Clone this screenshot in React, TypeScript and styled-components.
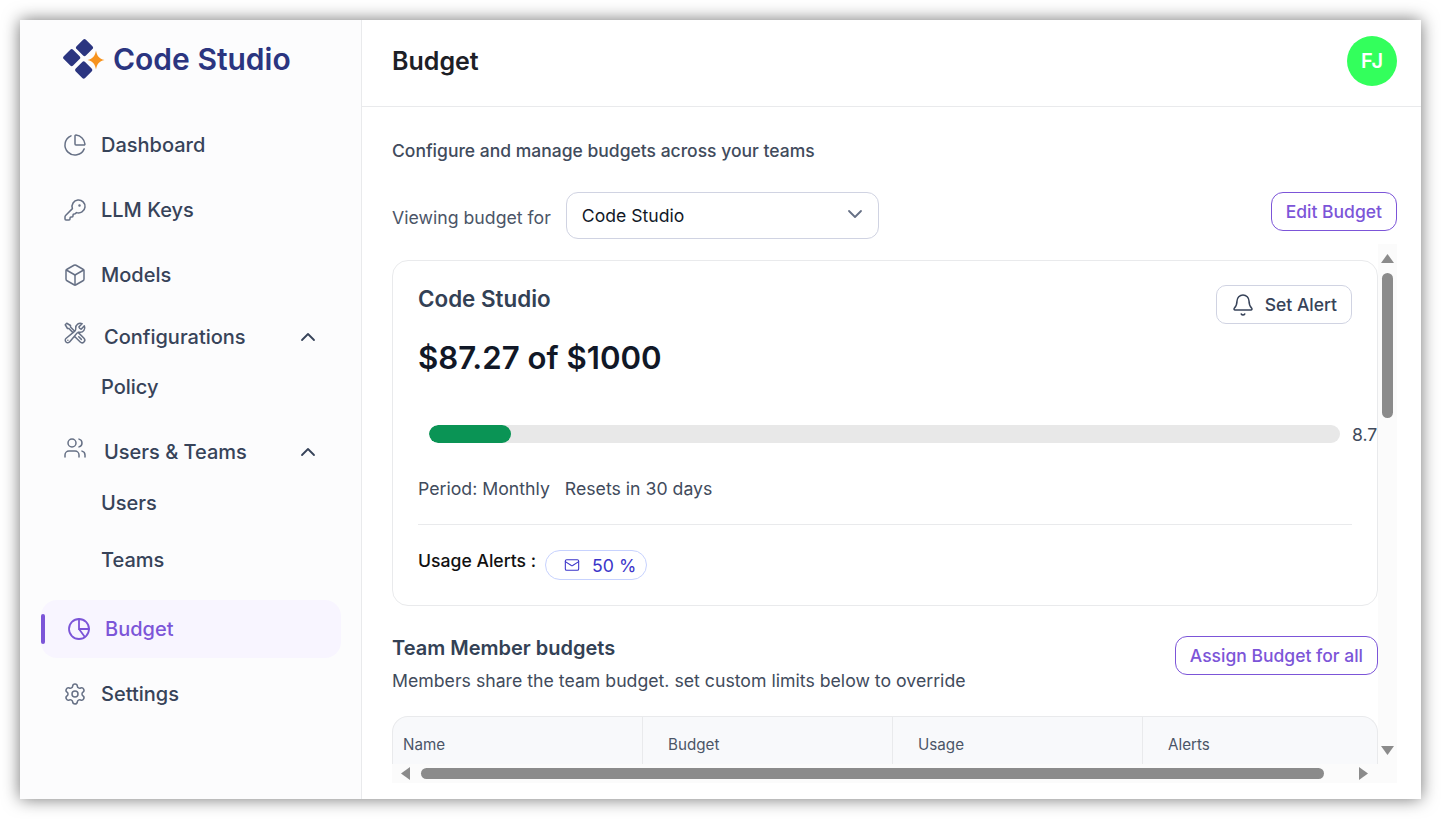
import React from 'react';
import styled, { createGlobalStyle } from 'styled-components';
import { Bell, Box, ChartPie, ChevronDown, ChevronUp, KeyRound, Mail, Settings, Users } from 'lucide-react';
import { HiOutlineWrenchScrewdriver } from 'react-icons/hi2';

const GlobalStyle = createGlobalStyle`
    html, body {
        margin: 0;
        padding: 0;
        background: #ffffff;
        font-family: 'Inter', 'Liberation Sans', sans-serif;
        overflow: hidden;
    }
    * {
        box-sizing: border-box;
    }
`;

const Frame = styled.div`
    display: flex;
    width: 1401px;
    height: 779px;
    margin: 20px;
    background: #ffffff;
    box-shadow: 0 0 16px rgba(0, 0, 0, 0.55);
    overflow: hidden;
`;

const Sidebar = styled.aside`
    display: flex;
    flex-direction: column;
    flex: 0 0 342px;
    padding: 0 20px 0 21px;
    background: #fcfcfd;
    border-right: 1px solid #e9eaec;
`;

const Brand = styled.div`
    display: flex;
    align-items: center;
    gap: 8px;
    height: 58px;
    margin: 10px 0 28px 22px;
`;

const BrandName = styled.div`
    font-size: 30px;
    font-weight: 600;
    color: #2b3580;
`;

const NavList = styled.nav`
    display: flex;
    flex-direction: column;
    gap: 7px;
`;

const NavItem = styled.div<{ $active?: boolean }>`
    position: relative;
    display: flex;
    align-items: center;
    gap: ${(props) => (props.$active ? '15px' : '14px')};
    height: 58px;
    margin-top: ${(props) => (props.$active ? '8px' : '0')};
    padding-left: ${(props) => (props.$active ? '27px' : '22px')};
    border-radius: 16px;
    font-size: 20px;
    font-weight: 500;
    color: ${(props) => (props.$active ? '#7c55d8' : '#374359')};
    background: ${(props) => (props.$active ? '#f8f5ff' : 'transparent')};

    svg {
        color: ${(props) => (props.$active ? '#7c55d8' : '#667085')};
        flex: none;
    }
`;

const ActiveMark = styled.span`
    position: absolute;
    left: 0;
    top: 14px;
    width: 4px;
    height: 30px;
    border-radius: 2px;
    background: #7c55d8;
`;

const NavGroup = styled.div<{ $first?: boolean }>`
    display: flex;
    flex-direction: column;
    margin-top: ${(props) => (props.$first ? '0' : '8px')};
`;

const GroupHead = styled.div`
    display: flex;
    align-items: center;
    gap: 17px;
    height: 52px;
    padding: 0 21px 0 22px;
    font-size: 20px;
    font-weight: 500;
    color: #374359;
`;

const GroupIcon = styled.span`
    display: flex;
    margin-bottom: 8px;
    color: #667085;
`;

const GroupLabel = styled.span`
    flex: 1;
`;

const SubList = styled.div`
    display: flex;
    flex-direction: column;
    gap: 7px;
`;

const SubItem = styled.div<{ $short?: boolean }>`
    display: flex;
    align-items: center;
    height: ${(props) => (props.$short ? '48px' : '50px')};
    padding-left: 60px;
    font-size: 20px;
    font-weight: 500;
    color: #374359;
`;

const Main = styled.main`
    display: flex;
    flex-direction: column;
    flex: 1;
    min-width: 0;
`;

const TopBar = styled.header`
    display: flex;
    align-items: center;
    justify-content: space-between;
    flex: 0 0 87px;
    padding: 0 24px 4px 30px;
    border-bottom: 1px solid #e9eaec;
`;

const PageTitle = styled.h1`
    margin: 0;
    font-size: 25px;
    font-weight: 600;
    color: #1d2026;
`;

const Avatar = styled.div`
    display: flex;
    align-items: center;
    justify-content: center;
    width: 50px;
    height: 50px;
    border-radius: 50%;
    background: #33ff5c;
    font-size: 20px;
    font-weight: 600;
    color: #ffffff;
`;

const Content = styled.div`
    display: flex;
    flex-direction: column;
    flex: 1;
    min-height: 0;
    padding: 34px 24px 16px 30px;
`;

const Intro = styled.p`
    margin: 0;
    font-size: 17.5px;
    line-height: 20px;
    font-weight: 500;
    color: #414b5c;
`;

const Toolbar = styled.div`
    display: flex;
    justify-content: space-between;
    align-items: flex-start;
    height: 52px;
    margin-top: 31px;
`;

const ViewingGroup = styled.div`
    display: flex;
    align-items: center;
    gap: 15px;
`;

const ViewingLabel = styled.span`
    font-size: 17.7px;
    color: #4b5567;
    margin-top: 3px;
`;

const SelectBox = styled.div`
    display: flex;
    align-items: center;
    justify-content: space-between;
    width: 313px;
    height: 47px;
    padding: 0 11px 0 15px;
    border: 1px solid #d0d3e2;
    border-radius: 12px;
    font-size: 17.6px;
    color: #111827;

    svg {
        color: #667085;
        margin-bottom: 3px;
    }
`;

const OutlineButton = styled.button`
    height: 39px;
    padding: 0 14px;
    background: #ffffff;
    border: 1px solid #7c55d8;
    border-radius: 12px;
    font-family: inherit;
    font-size: 17.5px;
    font-weight: 500;
    color: #7c55d8;
`;

const ScrollFrame = styled.div`
    display: grid;
    grid-template-columns: 986px 19px;
    grid-template-rows: 520px 19px;
`;

const Viewport = styled.div`
    overflow: hidden;
    padding-top: 16px;
`;

const Card = styled.section`
    height: 346px;
    padding: 24px 25px;
    border: 1px solid #e9eaec;
    border-radius: 16px;
    overflow: hidden;
`;

const CardHead = styled.div`
    display: flex;
    justify-content: space-between;
    align-items: flex-start;
`;

const CardTitle = styled.h2`
    margin: 0;
    font-size: 22.4px;
    line-height: 28px;
    font-weight: 600;
    color: #334155;
`;

const Amount = styled.div`
    margin-top: 25px;
    font-size: 31.2px;
    line-height: 40px;
    font-weight: 600;
    color: #111827;
`;

const AlertButton = styled.button`
    display: flex;
    align-items: center;
    gap: 10px;
    height: 39px;
    padding: 0 14px 0 14px;
    background: #ffffff;
    border: 1px solid #d0d3e2;
    border-radius: 10px;
    font-family: inherit;
    font-size: 17.5px;
    font-weight: 500;
    color: #374359;
`;

const ProgressRow = styled.div`
    display: flex;
    align-items: flex-start;
    gap: 12px;
    width: 1000px;
    margin: 47px 0 0 11px;
    white-space: nowrap;
`;

const ProgressTrack = styled.div`
    flex: 0 0 911px;
    height: 18px;
    border-radius: 9px;
    background: #e8e8e8;
    overflow: hidden;
`;

const ProgressFill = styled.div`
    height: 100%;
    border-radius: 9px;
    background: #0a9455;
`;

const ProgressValue = styled.span`
    font-size: 17.6px;
    line-height: 20px;
    color: #414b5c;
`;

const PeriodRow = styled.div`
    display: flex;
    gap: 15px;
    margin-top: 34px;
    font-size: 17.7px;
    line-height: 20px;
    color: #414b5c;
`;

const Divider = styled.hr`
    height: 1px;
    margin: 25px 0 0;
    border: 0;
    background: #e9eaec;
`;

const AlertsRow = styled.div`
    display: flex;
    align-items: flex-start;
    gap: 9px;
    margin-top: 25px;
`;

const AlertsLabel = styled.span`
    margin-top: 1px;
    font-size: 17.6px;
    line-height: 20px;
    font-weight: 500;
    color: #111111;
`;

const AlertPill = styled.div`
    display: flex;
    align-items: center;
    gap: 12px;
    height: 30px;
    padding: 0 10px 0 18px;
    border: 1px solid #c7d2fe;
    border-radius: 15px;
    font-size: 17.7px;
    font-weight: 400;
    color: #3b35c9;
`;

const TeamHead = styled.div`
    display: flex;
    justify-content: space-between;
    align-items: flex-start;
    margin-top: 30px;
`;

const TeamTitle = styled.h3`
    margin: 0;
    font-size: 20px;
    line-height: 24px;
    font-weight: 600;
    color: #334155;
`;

const TeamHint = styled.p`
    margin: 11px 0 0;
    font-size: 17.7px;
    line-height: 20px;
    color: #414b5c;
`;

const TableHead = styled.div`
    display: grid;
    grid-template-columns: 249px 250px 250px 1fr;
    height: 60px;
    margin-top: 25px;
    background: #f8f9fb;
    border: 1px solid #e9eaec;
    border-bottom: 0;
    border-radius: 16px 16px 0 0;
`;

const HeadCell = styled.div<{ $first?: boolean }>`
    padding: 18px 0 0 ${(props) => (props.$first ? '10px' : '25px')};
    border-left: ${(props) => (props.$first ? '0' : '1px solid #e9eaec')};
    font-size: 15.2px;
    line-height: 20px;
    font-weight: 400;
    color: #4b5567;
`;

const VerticalBar = styled.div`
    display: flex;
    flex-direction: column;
    align-items: center;
    padding-top: 10px;
    background: #fbfbfb;
`;

const VerticalThumb = styled.div`
    width: 11px;
    height: 145px;
    margin: 10px 0 328px;
    border-radius: 6px;
    background: #8b8b8b;
`;

const HorizontalBar = styled.div`
    display: flex;
    align-items: center;
    padding-left: 9px;
    background: #fbfbfb;
`;

const HorizontalThumb = styled.div`
    width: 903px;
    height: 11px;
    margin: 0 35px 0 11px;
    border-radius: 6px;
    background: #8b8b8b;
`;

const Corner = styled.div`
    background: #fbfbfb;
`;

const Arrow = styled.svg`
    display: block;
    flex: none;
    fill: #8b8b8b;
`;

const BudgetIcon = () => (
    <svg width="22" height="22" viewBox="1 1 22 22" fill="none" stroke="currentColor" strokeWidth="1.8" strokeLinecap="round">
        <circle cx="12" cy="12" r="10" />
        <path d="M12 2v10h10M12 12l5.5 7.5" />
    </svg>
);

const Logo = () => (
    <svg width="42" height="40" viewBox="0 0 42 40">
        <g fill="#2b3580">
            <rect x="14.9" y="2.1" width="13.2" height="13.2" rx="2" transform="rotate(45 21.5 8.7)" />
            <rect x="2.1" y="12.1" width="13.2" height="13.2" rx="2" transform="rotate(45 8.7 18.7)" />
            <rect x="14.1" y="24.4" width="13.2" height="13.2" rx="2" transform="rotate(45 20.7 31)" />
        </g>
        <path d="M33 11.5c.9 5.2 3 8.3 8.5 9.5-5.5 1.2-7.6 4.3-8.5 9.5-.9-5.2-3-8.3-8.5-9.5 5.5-1.2 7.6-4.3 8.5-9.5z" fill="#f7931e" />
    </svg>
);

const App: React.FC = () => {
    const used = 8.727;
    const iconProps = { size: 24, strokeWidth: 1.5 };

    return (
        <>
            <GlobalStyle />
            <Frame>
                <Sidebar>
                    <Brand>
                        <Logo />
                        <BrandName>Code Studio</BrandName>
                    </Brand>
                    <NavList>
                        <NavItem>
                            <ChartPie {...iconProps} />
                            Dashboard
                        </NavItem>
                        <NavItem>
                            <KeyRound {...iconProps} />
                            LLM Keys
                        </NavItem>
                        <NavItem>
                            <Box {...iconProps} />
                            Models
                        </NavItem>
                        <NavGroup $first>
                            <GroupHead>
                                <GroupIcon>
                                    <HiOutlineWrenchScrewdriver size={24} />
                                </GroupIcon>
                                <GroupLabel>Configurations</GroupLabel>
                                <ChevronUp size={24} strokeWidth={1.8} />
                            </GroupHead>
                            <SubList>
                                <SubItem $short>Policy</SubItem>
                            </SubList>
                        </NavGroup>
                        <NavGroup>
                            <GroupHead>
                                <GroupIcon>
                                    <Users {...iconProps} />
                                </GroupIcon>
                                <GroupLabel>Users &amp; Teams</GroupLabel>
                                <ChevronUp size={24} strokeWidth={1.8} />
                            </GroupHead>
                            <SubList>
                                <SubItem>Users</SubItem>
                                <SubItem>Teams</SubItem>
                            </SubList>
                        </NavGroup>
                        <NavItem $active>
                            <ActiveMark />
                            <BudgetIcon />
                            Budget
                        </NavItem>
                        <NavItem>
                            <Settings {...iconProps} />
                            Settings
                        </NavItem>
                    </NavList>
                </Sidebar>
                <Main>
                    <TopBar>
                        <PageTitle>Budget</PageTitle>
                        <Avatar>FJ</Avatar>
                    </TopBar>
                    <Content>
                        <Intro>Configure and manage budgets across your teams</Intro>
                        <Toolbar>
                            <ViewingGroup>
                                <ViewingLabel>Viewing budget for</ViewingLabel>
                                <SelectBox>
                                    Code Studio
                                    <ChevronDown size={24} strokeWidth={1.8} />
                                </SelectBox>
                            </ViewingGroup>
                            <OutlineButton>Edit Budget</OutlineButton>
                        </Toolbar>
                        <ScrollFrame>
                            <Viewport>
                                <Card>
                                    <CardHead>
                                        <div>
                                            <CardTitle>Code Studio</CardTitle>
                                            <Amount>$87.27 of $1000</Amount>
                                        </div>
                                        <AlertButton>
                                            <Bell size={24} strokeWidth={1.5} />
                                            Set Alert
                                        </AlertButton>
                                    </CardHead>
                                    <ProgressRow>
                                        <ProgressTrack>
                                            <ProgressFill style={{ width: `${used + 0.25}%` }} />
                                        </ProgressTrack>
                                        <ProgressValue>8.7%</ProgressValue>
                                    </ProgressRow>
                                    <PeriodRow>
                                        <span>Period: Monthly</span>
                                        <span>Resets in 30 days</span>
                                    </PeriodRow>
                                    <Divider />
                                    <AlertsRow>
                                        <AlertsLabel>Usage Alerts :</AlertsLabel>
                                        <AlertPill>
                                            <Mail size={16} strokeWidth={1.6} />
                                            50 %
                                        </AlertPill>
                                    </AlertsRow>
                                </Card>
                                <TeamHead>
                                    <div>
                                        <TeamTitle>Team Member budgets</TeamTitle>
                                        <TeamHint>Members share the team budget. set custom limits below to override</TeamHint>
                                    </div>
                                    <OutlineButton>Assign Budget for all</OutlineButton>
                                </TeamHead>
                                <TableHead>
                                    <HeadCell $first>Name</HeadCell>
                                    <HeadCell>Budget</HeadCell>
                                    <HeadCell>Usage</HeadCell>
                                    <HeadCell>Alerts</HeadCell>
                                </TableHead>
                            </Viewport>
                            <VerticalBar>
                                <Arrow width="13" height="9" viewBox="0 0 13 9">
                                    <path d="M6.5 0L13 9H0z" />
                                </Arrow>
                                <VerticalThumb />
                                <Arrow width="13" height="9" viewBox="0 0 13 9">
                                    <path d="M6.5 9L0 0h13z" />
                                </Arrow>
                            </VerticalBar>
                            <HorizontalBar>
                                <Arrow width="9" height="13" viewBox="0 0 9 13">
                                    <path d="M0 6.5L9 0v13z" />
                                </Arrow>
                                <HorizontalThumb />
                                <Arrow width="9" height="13" viewBox="0 0 9 13">
                                    <path d="M9 6.5L0 13V0z" />
                                </Arrow>
                            </HorizontalBar>
                            <Corner />
                        </ScrollFrame>
                    </Content>
                </Main>
            </Frame>
        </>
    );
};

export default App;
